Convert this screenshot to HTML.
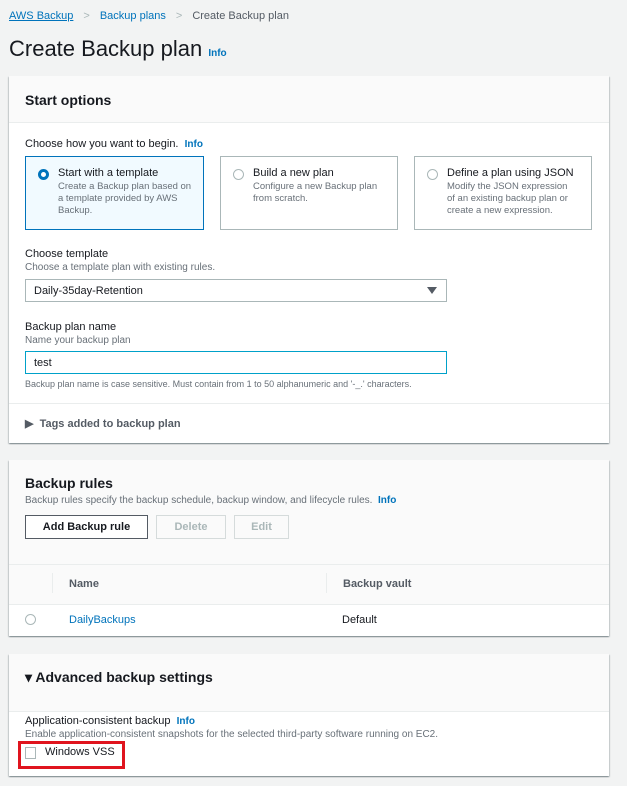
<!DOCTYPE html>
<html><head><style>
*{box-sizing:border-box;margin:0;padding:0}
body{width:627px;height:786px;background:#f2f3f3;font-family:"Liberation Sans",sans-serif;color:#16191f;position:relative;overflow:hidden;font-size:12px}
.a{position:absolute}
.link{color:#0073bb}
.panel{position:absolute;left:9px;width:600px;background:#fff;box-shadow:0 1px 1px rgba(0,28,36,.3),1px 1px 1px rgba(0,28,36,.15),-1px 1px 1px rgba(0,28,36,.15)}
.hdr{background:#fafafa;border-bottom:1px solid #eaeded}
.sub{font-size:10px;color:#687078}
.tile{position:absolute;top:156px;height:74px;border:1px solid #aab7b8;padding:10px 0 0 32px;font-size:11px}
.tile .sub{font-size:9.5px;line-height:12px;margin-top:2px}
.rad{position:absolute;left:12px;top:12px;width:11px;height:11px;border:1px solid #aab7b8;border-radius:50%;background:#fff}
.btn{position:absolute;top:515px;height:24px;border:1px solid #d5dbdb;font-weight:bold;font-size:11px;color:#aab7b8;text-align:center;line-height:22px}
.info{color:#0073bb;font-weight:bold;font-size:10px}
</style></head><body>
<div class="a" style="left:9px;top:10px;font-size:11px"><span class="link" style="text-decoration:underline">AWS Backup</span><span style="color:#aab7b8;margin:0 10px">&gt;</span><span class="link">Backup plans</span><span style="color:#aab7b8;margin:0 10px">&gt;</span><span style="color:#545b64">Create Backup plan</span></div>
<div class="a" style="left:9px;top:36px;font-size:22px">Create Backup plan <span class="info">Info</span></div>

<div class="panel" style="top:76px;height:367px">
 <div class="hdr" style="height:47px;padding:16px 16px;font-weight:bold;font-size:14px">Start options</div>
</div>
<div class="a" style="left:25px;top:138px;font-size:11px">Choose how you want to begin. &nbsp;<span class="info">Info</span></div>
<div class="tile" style="left:25px;width:179px;background:#f1faff;border-color:#0073bb"><div class="rad" style="border:3.5px solid #0073bb"></div>Start with a template<div class="sub" style="color:#687078">Create a Backup plan based on<br>a template provided by AWS<br>Backup.</div></div>
<div class="tile" style="left:220px;width:178px"><div class="rad"></div>Build a new plan<div class="sub">Configure a new Backup plan<br>from scratch.</div></div>
<div class="tile" style="left:414px;width:178px"><div class="rad"></div>Define a plan using JSON<div class="sub">Modify the JSON expression<br>of an existing backup plan or<br>create a new expression.</div></div>
<div class="a" style="left:25px;top:248px;font-size:11px">Choose template</div>
<div class="a sub" style="left:25px;top:262px">Choose a template plan with existing rules.</div>
<div class="a" style="left:25px;top:279px;width:422px;height:23px;border:1px solid #aab7b8;padding:5px 8px;font-size:11px">Daily-35day-Retention<span style="position:absolute;right:9px;top:7px;border-left:5px solid transparent;border-right:5px solid transparent;border-top:7px solid #545b64"></span></div>
<div class="a" style="left:25px;top:321px;font-size:11px">Backup plan name</div>
<div class="a sub" style="left:25px;top:335px">Name your backup plan</div>
<div class="a" style="left:25px;top:351px;width:422px;height:23px;border:1px solid #00a1c9;padding:5px 8px;font-size:11px">test</div>
<div class="a sub" style="left:25px;top:379px;font-size:9px">Backup plan name is case sensitive. Must contain from 1 to 50 alphanumeric and '-_.' characters.</div>
<div class="a" style="left:9px;top:403px;width:600px;border-top:1px solid #eaeded"></div>
<div class="a" style="left:25px;top:417px;font-size:11px;font-weight:bold;color:#545b64">▶ &nbsp;Tags added to backup plan</div>

<div class="panel" style="top:460px;height:176px;background:#fafafa">
 <div style="position:absolute;left:0;top:104px;width:600px;height:41px;border-top:1px solid #eaeded;border-bottom:1px solid #eaeded"></div>
 <div style="position:absolute;left:0;top:145px;width:600px;height:31px;background:#fff"></div>
</div>
<div class="a" style="left:25px;top:475px;font-size:14px;font-weight:bold">Backup rules</div>
<div class="a sub" style="left:25px;top:495px">Backup rules specify the backup schedule, backup window, and lifecycle rules. &nbsp;<span class="info">Info</span></div>
<div class="btn" style="left:25px;width:123px;border-color:#545b64;color:#16191f;background:#fff">Add Backup rule</div>
<div class="btn" style="left:156px;width:70px">Delete</div>
<div class="btn" style="left:234px;width:55px">Edit</div>
<div class="a" style="left:52px;top:573px;height:20px;border-left:1px solid #eaeded"></div>
<div class="a" style="left:326px;top:573px;height:20px;border-left:1px solid #eaeded"></div>
<div class="a" style="left:69px;top:578px;font-size:11px;font-weight:bold;color:#545b64">Name</div>
<div class="a" style="left:343px;top:578px;font-size:11px;font-weight:bold;color:#545b64">Backup vault</div>
<div class="a" style="left:25px;top:614px;width:11px;height:11px;border:1px solid #aab7b8;border-radius:50%"></div>
<div class="a link" style="left:69px;top:614px;font-size:11px">DailyBackups</div>
<div class="a" style="left:342px;top:614px;font-size:11px">Default</div>

<div class="panel" style="top:654px;height:122px">
 <div class="hdr" style="height:58px;padding:15px 16px;font-weight:bold;font-size:14px">▾ Advanced backup settings</div>
</div>
<div class="a" style="left:25px;top:715px;font-size:11px">Application-consistent backup &nbsp;<span class="info">Info</span></div>
<div class="a sub" style="left:25px;top:729px">Enable application-consistent snapshots for the selected third-party software running on EC2.</div>
<div class="a" style="left:18px;top:741px;width:107px;height:28px;border:3px solid #e0141e"></div>
<div class="a" style="left:25px;top:747px;width:11px;height:12px;border:1px solid #aab7b8"></div>
<div class="a" style="left:45px;top:746px;font-size:11px">Windows VSS</div>
</body></html>
